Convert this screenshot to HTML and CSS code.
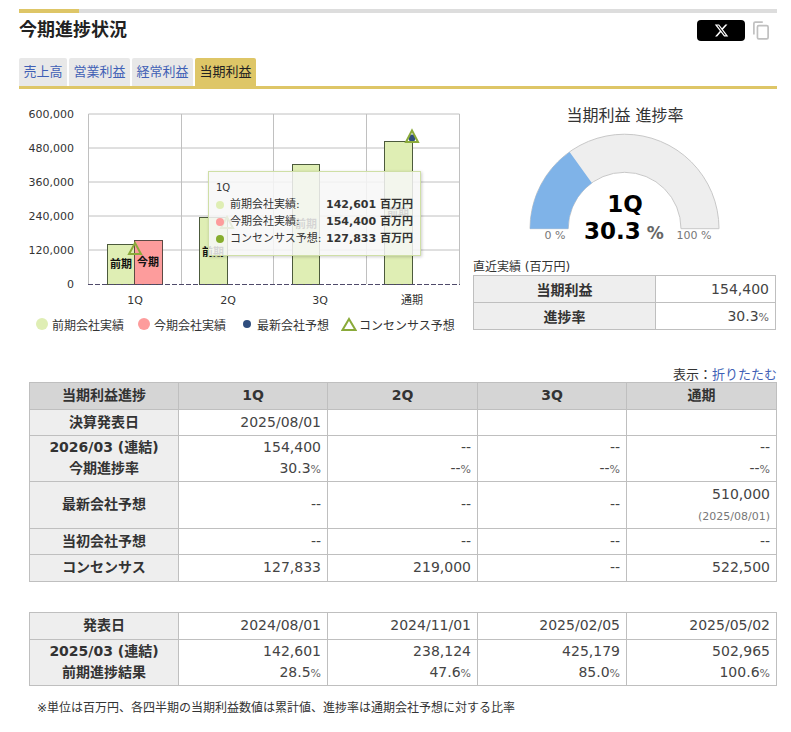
FILE: index.html
```html
<!DOCTYPE html>
<html lang="ja">
<head>
  <meta charset="UTF-8">
  <title>今期進捗状況</title>
  <link rel="stylesheet" href="styles.css">
</head>
<body>

  <div class="page">
    <div class="top-bar"><span class="top-bar-mark"></span></div>

    <div class="title-row">
      <h2>今期進捗状況</h2>
      <div class="share">
        <a class="x-button" href="#">
          <svg width="15" height="15" viewBox="0 0 24 24"><path fill="#fff" d="M18.244 2.25h3.308l-7.227 8.26 8.502 11.24H16.17l-5.214-6.817L4.99 21.75H1.68l7.73-8.835L1.254 2.25H8.08l4.713 6.231zm-1.161 17.52h1.833L7.084 4.126H5.117z"/></svg>
        </a>
        <svg class="copy-icon" width="16" height="19" viewBox="0 0 18 21" fill="none" stroke="#c0c0c0" stroke-width="1.9">
          <path d="M1 15V2.5A1.5 1.5 0 0 1 2.5 1H11"/>
          <rect x="5" y="5" width="12" height="15" rx="1.5"/>
        </svg>
      </div>
    </div>

    <!-- tabs -->
    <div class="tabs">
      <a href="#">売上高</a>
      <a href="#">営業利益</a>
      <a href="#">経常利益</a>
      <a href="#" class="active">当期利益</a>
    </div>

    <div class="charts">
      <div class="bar-chart">
        <svg width="451" height="216" viewBox="19 100 451 216">
          <g class="grid">
            <path d="M88.5 114H459.5M88.5 148H459.5M88.5 182H459.5M88.5 216H459.5M88.5 250H459.5"/>
            <path d="M88.5 114V284M181.5 114V284M273.5 114V284M366.5 114V284M459.5 114V284"/>
          </g>
          <g class="axis-y" text-anchor="end">
            <text x="74" y="118">600,000</text>
            <text x="74" y="152">480,000</text>
            <text x="74" y="186">360,000</text>
            <text x="74" y="220">240,000</text>
            <text x="74" y="254">120,000</text>
            <text x="74" y="288">0</text>
          </g>
          <g class="bar-prev">
            <rect x="107.5" y="244.5" width="27" height="40"/>
            <rect x="199.5" y="217.5" width="28" height="67"/>
            <rect x="292.5" y="164.5" width="27" height="120"/>
            <rect x="384.5" y="141.5" width="28" height="143"/>
          </g>
          <rect class="bar-cur" x="134.5" y="240.5" width="28" height="44"/>
          <path class="axis-x" d="M88 284.5H460"/>
          <g class="bar-label" text-anchor="middle">
            <text x="121" y="268">前期</text>
            <text x="148" y="266">今期</text>
            <text x="213" y="256">前期</text>
            <text x="306" y="228">前期</text>
            <text x="398" y="217">前期</text>
          </g>
          <g class="mark-tri">
            <path d="M135 243L141 254H129Z"/>
            <path d="M227 217L233 228H221Z"/>
          </g>
          <circle class="mark-dot" cx="412" cy="138" r="3.5"/>
          <path class="mark-tri-top" d="M412 130.5L418 142H406Z"/>
          <g class="axis-q" text-anchor="middle">
            <text x="135" y="304">1Q</text>
            <text x="228" y="304">2Q</text>
            <text x="320" y="304">3Q</text>
            <text x="412" y="304">通期</text>
          </g>
        </svg>

        <div class="tooltip">
          <div class="tooltip-head">1Q</div>
          <div class="tooltip-row"><i class="dot dot-prev"></i><span>前期会社実績:</span><b>142,601 百万円</b></div>
          <div class="tooltip-row"><i class="dot dot-cur"></i><span>今期会社実績:</span><b>154,400 百万円</b></div>
          <div class="tooltip-row"><i class="dot dot-cons"></i><span>コンセンサス予想:</span><b>127,833 百万円</b></div>
        </div>

        <div class="legend">
          <span class="legend-item"><i class="swatch swatch-prev"></i>前期会社実績</span>
          <span class="legend-item"><i class="swatch swatch-cur"></i>今期会社実績</span>
          <span class="legend-item"><i class="swatch swatch-fc"></i>最新会社予想</span>
          <span class="legend-item legend-cons">
            <svg width="16" height="14" viewBox="0 0 16 14"><path d="M8 2L14.5 13H1.5Z" fill="none" stroke="#8aaa3a" stroke-width="2"/></svg>コンセンサス予想
          </span>
        </div>
      </div>

      <div class="gauge">
        <h3>当期利益 進捗率</h3>
        <svg width="303" height="126" viewBox="0 0 303 126">
          <path class="gauge-bg" d="M57 96.7A94.5 94.5 0 0 1 246 96.7H208A56.3 56.3 0 0 0 95.2 96.7Z"/>
          <path class="gauge-fill" d="M57 96.7A94.5 94.5 0 0 1 96.6 20L118.9 50.9A56.3 56.3 0 0 0 95.2 96.7Z"/>
          <text class="gauge-scale" x="82" y="107" text-anchor="middle">0 %</text>
          <text class="gauge-scale" x="221" y="107" text-anchor="middle">100 %</text>
          <text class="gauge-q" x="152" y="80" text-anchor="middle">1Q</text>
          <text class="gauge-q" x="151" y="107" text-anchor="middle">30.3<tspan class="gauge-pct" dx="6">%</tspan></text>
        </svg>
        <div class="recent-label">直近実績 (百万円)</div>
        <table class="recent">
          <tr><th>当期利益</th><td>154,400</td></tr>
          <tr><th>進捗率</th><td>30.3<small>%</small></td></tr>
        </table>
      </div>
    </div>

    <div class="fold">表示：<a href="#">折りたたむ</a></div>

    <table class="data">
      <tr class="head">
        <th>当期利益進捗</th><th>1Q</th><th>2Q</th><th>3Q</th><th>通期</th>
      </tr>
      <tr>
        <th>決算発表日</th><td>2025/08/01</td><td></td><td></td><td></td>
      </tr>
      <tr>
        <th>2026/03 (連結)<br>今期進捗率</th>
        <td>154,400<br>30.3<small>%</small></td>
        <td>--<br>--<small>%</small></td>
        <td>--<br>--<small>%</small></td>
        <td>--<br>--<small>%</small></td>
      </tr>
      <tr class="tall">
        <th>最新会社予想</th><td>--</td><td>--</td><td>--</td>
        <td>510,000<br><span class="note">(2025/08/01)</span></td>
      </tr>
      <tr>
        <th>当初会社予想</th><td>--</td><td>--</td><td>--</td><td>--</td>
      </tr>
      <tr>
        <th>コンセンサス</th><td>127,833</td><td>219,000</td><td>--</td><td>522,500</td>
      </tr>
    </table>

    <table class="data data-prev">
      <tr>
        <th>発表日</th><td>2024/08/01</td><td>2024/11/01</td><td>2025/02/05</td><td>2025/05/02</td>
      </tr>
      <tr>
        <th>2025/03 (連結)<br>前期進捗結果</th>
        <td>142,601<br>28.5<small>%</small></td>
        <td>238,124<br>47.6<small>%</small></td>
        <td>425,179<br>85.0<small>%</small></td>
        <td>502,965<br>100.6<small>%</small></td>
      </tr>
    </table>

    <p class="footnote">※単位は百万円、各四半期の当期利益数値は累計値、進捗率は通期会社予想に対する比率</p>
  </div>

</body>
</html>
```

FILE: styles.css
```css
body {
  margin: 0;
  background: #fff;
  color: #333;
  font-family: "DejaVu Sans", "Noto Sans CJK JP", sans-serif;
  font-size: 13px;
}

.page {
  width: 758px;
  margin-left: 19px;
  padding-top: 9px;
}

.top-bar {
  height: 4px;
  background: #ddd;
}

.top-bar-mark {
  display: block;
  width: 60px;
  height: 4px;
  background: #dec667;
}

.title-row {
  display: flex;
  justify-content: space-between;
  height: 45px;
}

.title-row h2 {
  margin: 6px 0 0;
  color: #222;
  font-size: 18px;
  line-height: 22px;
  font-weight: bold;
}

.share {
  display: flex;
  align-items: flex-start;
  gap: 8px;
  margin-top: 7px;
  padding-right: 8px;
}

.x-button {
  display: flex;
  align-items: center;
  justify-content: center;
  width: 48px;
  height: 21px;
  background: #000;
  border-radius: 4px;
}

.copy-icon {
  margin-top: 1px;
}

/* tabs */
.tabs {
  display: flex;
  gap: 2px;
  height: 28px;
  border-bottom: 3px solid #dec667;
}

.tabs a {
  padding: 0 4.5px;
  background: #e8e8e8;
  border-radius: 2px 2px 0 0;
  color: #3f5fb5;
  line-height: 28px;
  text-decoration: none;
}

.tabs a.active {
  background: #dec667;
  color: #222;
}

/* charts */
.charts {
  display: flex;
  height: 262px;
  margin-top: 11px;
}

.bar-chart {
  position: relative;
  width: 454px;
}

.bar-chart svg {
  display: block;
}

.grid path {
  fill: none;
  stroke: #c0c0c0;
  stroke-width: 1;
}

.axis-y text {
  font-size: 11px;
  fill: #333;
}

.axis-q text {
  font-size: 11px;
  fill: #333;
}

.bar-prev rect {
  fill: #dfeeb4;
  stroke: #4c5a3c;
}

.bar-cur {
  fill: #fd9c9c;
  stroke: #5c4a44;
}

.axis-x {
  stroke: #4f4a6a;
  stroke-dasharray: 5 2;
}

.bar-label text {
  font-size: 11px;
  font-weight: bold;
  fill: #111;
}

.mark-tri path,
.mark-tri-top {
  fill: none;
  stroke: #8aaa3a;
  stroke-width: 2;
}

.mark-dot {
  fill: #2f4d7e;
}

.tooltip {
  position: absolute;
  left: 189px;
  top: 71px;
  width: 197px;
  height: 69px;
  padding: 7px;
  background: rgba(247, 247, 247, 0.85);
  border: 1px solid #cfdfa6;
  box-shadow: 1px 1px 3px rgba(0, 0, 0, 0.2);
  font-size: 11px;
  line-height: 17px;
}

.tooltip-head {
  font-size: 10px;
}

.tooltip-row {
  display: flex;
  align-items: center;
}

.tooltip-row span {
  width: 97px;
  white-space: nowrap;
}

.tooltip-row b {
  white-space: nowrap;
}

.dot {
  flex: none;
  width: 8px;
  height: 8px;
  margin-right: 6px;
  border-radius: 50%;
}

.dot-prev {
  background: #dfeeb4;
}

.dot-cur {
  background: #fd9c9c;
}

.dot-cons {
  background: #86ad2d;
}

.legend {
  display: flex;
  align-items: center;
  gap: 14px;
  margin: 0 0 0 17px;
  height: 16px;
  font-size: 12px;
  white-space: nowrap;
}

.legend-item {
  display: flex;
  align-items: center;
  gap: 4px;
}

.legend-cons {
  gap: 2px;
  margin-left: -2px;
}

.swatch {
  border-radius: 50%;
}

.swatch-prev {
  width: 12px;
  height: 12px;
  background: #dfeeb4;
}

.swatch-cur {
  width: 12px;
  height: 12px;
  background: #fd9c9c;
}

.swatch-fc {
  width: 8px;
  height: 8px;
  margin: 0 2px 0 3px;
  background: #2f4d7e;
}

/* gauge */
.gauge {
  width: 304px;
}

.gauge h3 {
  margin: 0;
  height: 32px;
  font-size: 16px;
  font-weight: normal;
  line-height: 32px;
  text-align: center;
}

.gauge svg {
  display: block;
}

.gauge-bg {
  fill: #eee;
  stroke: #c8c8c8;
}

.gauge-fill {
  fill: #7fb3e8;
}

.gauge-scale {
  font-size: 11px;
  fill: #777;
}

.gauge-q {
  font-size: 23px;
  font-weight: bold;
  fill: #000;
}

.gauge-pct {
  font-size: 17px;
  fill: #666;
}

.recent-label {
  height: 17px;
  font-size: 12px;
  line-height: 18px;
}

table {
  border-collapse: collapse;
  table-layout: fixed;
}

th,
td {
  border: 1px solid #bfbfbf;
  padding: 1px 6px 2px;
}

th {
  background: #eee;
  font-weight: bold;
}

td {
  color: #444;
  text-align: right;
}

small {
  font-size: 11px;
  line-height: 1;
  color: #666;
}

.recent {
  width: 303px;
}

.recent tr {
  height: 27px;
}

.recent th {
  width: 169px;
  font-size: 14px;
}

.recent td {
  font-size: 14px;
}

.fold {
  height: 17px;
  margin-top: 3px;
  font-size: 13px;
  line-height: 19px;
  text-align: right;
}

.fold a {
  color: #3f5fb5;
  text-decoration: none;
}

/* tables */
.data {
  width: 748px;
  margin-left: 10px;
  font-size: 14px;
  line-height: 21px;
}

.data tr {
  height: 26px;
}

.data tr:first-child,
.data tr:last-child {
  height: 27px;
}

.data tr:first-child > :nth-child(1),
.data tr:first-child > :nth-child(2),
.data tr:first-child > :nth-child(4) {
  box-sizing: border-box;
  width: 149px;
}

.data .tall {
  height: 47px;
}

.data .head th {
  background: #d5d5d5;
}

.note {
  font-size: 11px;
  line-height: 1;
  color: #777;
}

.data-prev {
  margin-top: 30px;
}

.footnote {
  margin: 14px 0 0 18px;
  font-size: 12px;
  line-height: 16px;
}
```
